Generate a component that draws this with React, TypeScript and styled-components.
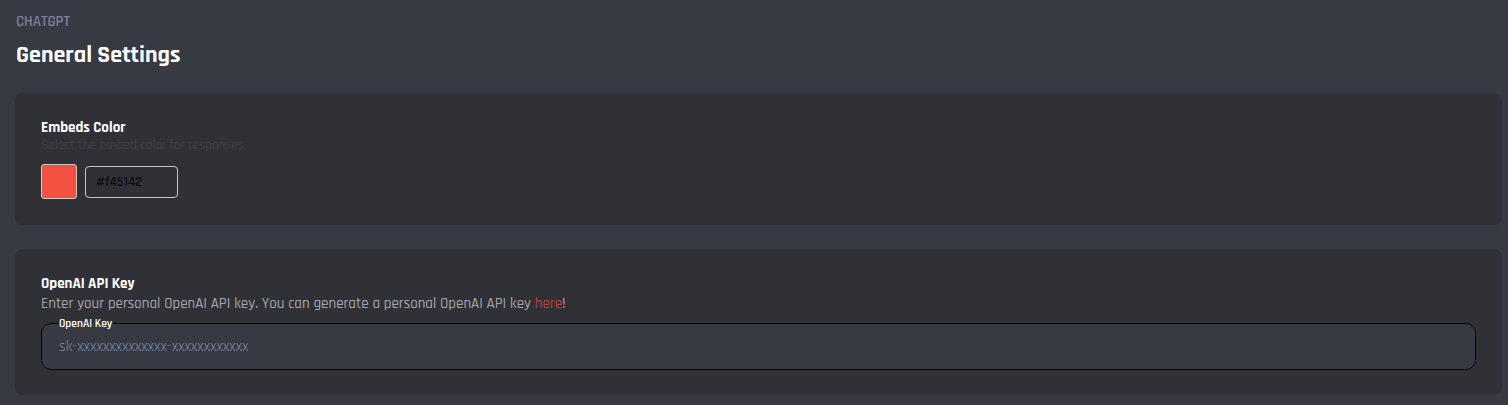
import styled, { createGlobalStyle } from "styled-components";

const GlobalStyle = createGlobalStyle`
  html, body {
    margin: 0;
    padding: 0;
    background-color: #373a43;
  }

  body {
    font-family: "Rajdhani", "Liberation Sans Narrow", "DejaVu Sans Condensed", sans-serif;
  }
`;

const Page = styled.div`
  background-color: #373a43;
  min-height: 405px;
  padding: 12px 6px 0 15px;
  box-sizing: border-box;
`;

const Category = styled.div`
  color: #7b819f;
  font-size: 15px;
  font-weight: 600;
  line-height: 20px;
  padding-left: 1px;
  text-transform: uppercase;
`;

const PageTitle = styled.h1`
  color: #ffffff;
  font-size: 24px;
  font-weight: 700;
  line-height: 30px;
  margin: 8px 0 0;
  padding-left: 1px;
`;

const Cards = styled.div`
  display: flex;
  flex-direction: column;
  gap: 24px;
  margin-top: 23px;
`;

const Card = styled.section<{ $top: number; $bottom: number }>`
  background-color: #303136;
  border-radius: 8px;
  padding: ${(p) => p.$top}px 26px ${(p) => p.$bottom}px;
`;

const CardTitle = styled.h2`
  color: #ffffff;
  font-size: 15px;
  font-weight: 700;
  line-height: 18px;
  margin: 0;
`;

const CardHint = styled.p<{ $dim?: boolean }>`
  color: ${(p) => (p.$dim ? "#3e3f46" : "#a3a4ab")};
  font-size: ${(p) => (p.$dim ? "13.4px" : "15px")};
  font-weight: 500;
  line-height: ${(p) => (p.$dim ? "18px" : "20px")};
  margin: ${(p) => (p.$dim ? "0" : "1px 0 0")};
`;

const RedLink = styled.a`
  color: #b83f3b;
  text-decoration: none;
`;

const ColorRow = styled.div`
  display: flex;
  align-items: center;
  gap: 8px;
  margin-top: 9px;
`;

const Swatch = styled.div<{ $color: string }>`
  width: 36px;
  height: 35px;
  box-sizing: border-box;
  background-color: ${(p) => p.$color};
  border: 1px solid #c9c9c9;
  border-radius: 3px;
`;

const HexInput = styled.input`
  width: 93px;
  height: 32px;
  box-sizing: border-box;
  background: transparent;
  border: 1px solid #c6c6c6;
  border-radius: 4px;
  padding: 0 10px;
  color: #0c0d0f;
  font-family: inherit;
  font-size: 13.5px;
  font-weight: 600;
  outline: none;
`;

const KeyField = styled.fieldset`
  margin: 3px 0 0;
  padding: 0 16px 6px;
  border: 1px solid #050506;
  border-radius: 10px;
  background-color: #373a43;
  min-width: 0;
`;

const KeyLegend = styled.legend`
  color: #ffffff;
  font-size: 11.5px;
  font-weight: 600;
  line-height: 13px;
  padding: 0 1px;
`;

const KeyInput = styled.input`
  display: block;
  width: 100%;
  height: 33px;
  box-sizing: border-box;
  background: transparent;
  border: none;
  outline: none;
  padding: 0 1px;
  color: #d0d3db;
  font-family: inherit;
  font-size: 15.5px;
  font-weight: 400;

  &::placeholder {
    color: #7e8ba7;
  }
`;

export default function App() {
  const embedColor = "#f45142";
  return (
    <Page>
      <GlobalStyle />
      <Category>ChatGPT</Category>
      <PageTitle>General Settings</PageTitle>
      <Cards>
        <Card $top={26} $bottom={26}>
          <CardTitle>Embeds Color</CardTitle>
          <CardHint $dim>Select the embed color for responses.</CardHint>
          <ColorRow>
            <Swatch $color={embedColor} />
            <HexInput defaultValue={embedColor} />
          </ColorRow>
        </Card>
        <Card $top={26} $bottom={25}>
          <CardTitle>OpenAI API Key</CardTitle>
          <CardHint>
            Enter your personal OpenAI API key. You can generate a personal OpenAI API key{" "}
            <RedLink href="#">here</RedLink>!
          </CardHint>
          <KeyField>
            <KeyLegend>OpenAI Key</KeyLegend>
            <KeyInput placeholder="sk-xxxxxxxxxxxxxx-xxxxxxxxxxxx" />
          </KeyField>
        </Card>
      </Cards>
    </Page>
  );
}
